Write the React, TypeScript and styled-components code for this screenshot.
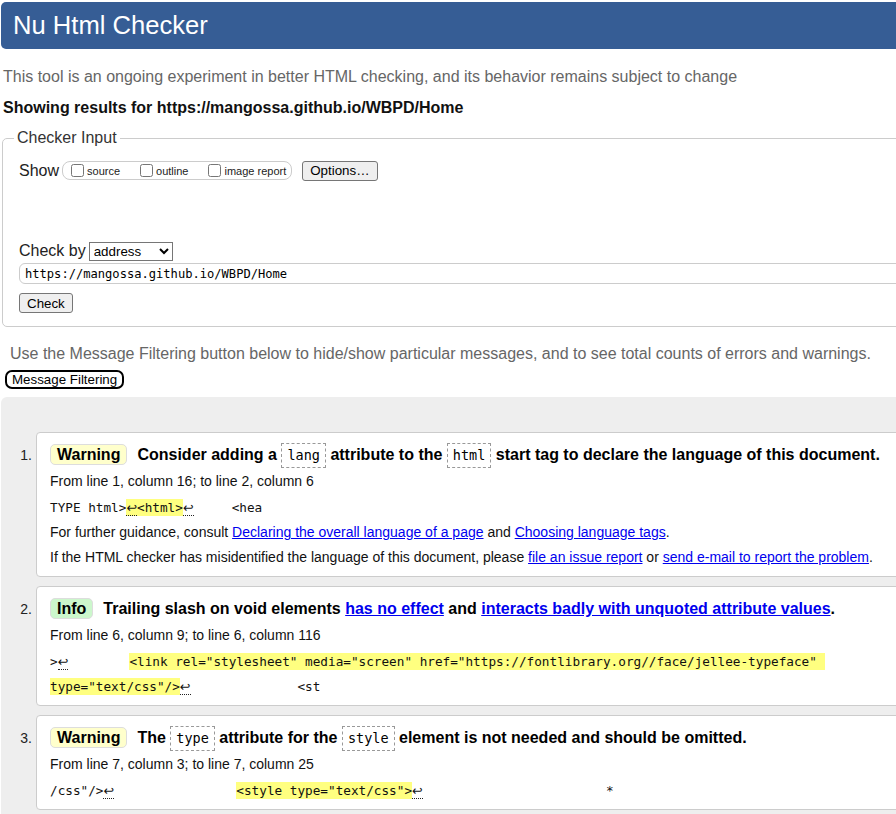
import React from "react";
import styled, { createGlobalStyle } from "styled-components";

const GlobalStyle = createGlobalStyle`
  body {
    margin: 0;
    background: #fff;
    color: #000;
    font-family: "Liberation Sans", Arial, sans-serif;
    font-size: 16px;
    overflow: hidden;
  }
`;

type BadgeKind = "warning" | "info";

interface Message {
  kind: BadgeKind;
  title: React.ReactNode;
  location: string;
  extract: React.ReactNode;
  notes?: React.ReactNode[];
}

const Page = styled.div`
  width: 940px;
  padding: 2px 0 0 1px;
`;

const Header = styled.h1`
  margin: 0;
  height: 47px;
  padding-left: 12px;
  background: #365d95;
  color: #fff;
  font-size: 25.6px;
  font-weight: normal;
  line-height: 47px;
  border-radius: 5px 0 0 5px;
`;

const Intro = styled.p`
  margin: 19px 0 0 2px;
  color: #666;
  line-height: 18px;
`;

const ResultsFor = styled.p`
  margin: 13px 0 0 2px;
  font-weight: bold;
  line-height: 18px;
  color: #111;
`;

const InputFieldset = styled.fieldset`
  margin: 12px 0 0 1px;
  padding: 0 0 13px 16px;
  border: 1px solid #ccc;
  border-radius: 5px;
  min-width: 0;
`;

const Legend = styled.legend`
  margin-left: -5px;
  padding: 0 3px;
  line-height: 18px;
  color: #333;
`;

const Row = styled.div<{ $top: number; $height: number }>`
  display: flex;
  align-items: center;
  margin-top: ${(p) => p.$top}px;
  height: ${(p) => p.$height}px;
`;

const FieldLabel = styled.span`
  font-size: 16px;
  line-height: 18px;
  color: #222;
  margin-right: 3px;
`;

const OptionGroup = styled.span`
  display: inline-flex;
  align-items: center;
  height: 17px;
  padding: 0 5px 0 4px;
  border: 1px solid #ccc;
  border-radius: 8px;
`;

const OptionItem = styled.label<{ $last?: boolean }>`
  display: inline-flex;
  align-items: center;
  font-size: 11px;
  color: #222;
  margin-right: ${(p) => (p.$last ? 0 : 16)}px;
`;

const Checkbox = styled.input`
  width: 13px;
  height: 13px;
  margin: 0 3px 0 4px;
`;

const PlainButton = styled.button<{ $gap?: number }>`
  height: 20px;
  margin-left: ${(p) => p.$gap ?? 0}px;
  padding: 0 7px;
  font-family: "Liberation Sans", Arial, sans-serif;
  font-size: 13.33px;
  color: #000;
  background: #efefef;
  border: 1px solid #767676;
  border-radius: 3px;
`;

const AddressSelect = styled.select`
  width: 84px;
  height: 19px;
  font-family: "Liberation Sans", Arial, sans-serif;
  font-size: 13.33px;
  color: #000;
  background: #fff;
  border: 1px solid #767676;
  border-radius: 0;
`;

const AddressInput = styled.input`
  display: block;
  box-sizing: border-box;
  width: 100%;
  height: 21px;
  margin-top: 3px;
  padding: 0 5px;
  font-family: "DejaVu Sans Mono", monospace;
  font-size: 12.1px;
  color: #000;
  border: 1px solid #ccc;
  border-radius: 6px;
`;

const CheckRow = styled.div`
  margin-top: 9px;
  height: 20px;
`;

const Hint = styled.p`
  margin: 18px 0 0 9px;
  color: #666;
  line-height: 18px;
`;

const FilterButton = styled.button`
  display: block;
  margin: 7px 0 0 4px;
  height: 19px;
  padding: 0 5px;
  font-family: "Liberation Sans", Arial, sans-serif;
  font-size: 13.33px;
  line-height: 15px;
  color: #000;
  background: #fff;
  border: 2px solid #000;
  border-radius: 7px;
`;

const MessageArea = styled.div`
  margin-top: 8px;
  padding-top: 35px;
  background: #eee;
  border-radius: 6px 0 0 0;
  min-height: 400px;
`;

const MessageList = styled.ol`
  display: flex;
  flex-direction: column;
  gap: 9px;
  margin: 0;
  padding: 0;
  list-style: none;
`;

const MessageItem = styled.li`
  display: flex;
  align-items: flex-start;
`;

const Num = styled.span`
  flex: 0 0 35px;
  box-sizing: border-box;
  padding: 10px 4px 0 0;
  text-align: right;
  font-size: 14px;
  line-height: 26px;
  color: #222;
`;

const Card = styled.div`
  flex: 1;
  padding: 9px 12px 6px 13px;
  background: #fff;
  border: 1px solid #ccc;
  border-radius: 4px;
`;

const Title = styled.div`
  font-size: 16px;
  font-weight: bold;
  line-height: 26px;
  color: #000;
  white-space: nowrap;
`;

const Badge = styled.span<{ $kind: BadgeKind }>`
  display: inline-block;
  margin-right: 10px;
  padding: 0 6px;
  line-height: 19px;
  background: ${(p) => (p.$kind === "warning" ? "#ffffcc" : "#ccf7cc")};
  border: 1px solid #ddd;
  border-radius: 5px;
`;

const CodeBox = styled.code`
  display: inline-block;
  padding: 0 5px;
  font-family: "DejaVu Sans Mono", monospace;
  font-size: 13.5px;
  font-weight: normal;
  line-height: 23px;
  border: 1px dashed #999;
`;

const Link = styled.a`
  color: #00e;
  text-decoration: underline;
`;

const Location = styled.div`
  margin-top: 1px;
  font-size: 14px;
  line-height: 25px;
  color: #111;
`;

const Extract = styled.div`
  margin-top: 1px;
  font-family: "DejaVu Sans Mono", monospace;
  font-size: 12.7px;
  line-height: 25px;
  white-space: pre;
  color: #111;
`;

const Mark = styled.span`
  background: #ffff80;
  padding: 1px 0;
`;

const Return = styled.span`
  font-family: "DejaVu Sans", sans-serif;
  border-bottom: 1px dotted #222;
`;

const Note = styled.div`
  font-size: 14px;
  line-height: 25px;
  color: #111;
`;

const Ret: React.FC = () => <Return>↩</Return>;

const buildMessages = (): Message[] => [
  {
    kind: "warning",
    title: (
      <>
        Consider adding a <CodeBox>lang</CodeBox> attribute to the{" "}
        <CodeBox>html</CodeBox> start tag to declare the language of this
        document.
      </>
    ),
    location: "From line 1, column 16; to line 2, column 6",
    extract: (
      <>
        {"TYPE html>"}
        <Mark>
          <Ret />
          {"<html>"}
        </Mark>
        <Ret />
        {"     <hea"}
      </>
    ),
    notes: [
      <>
        For further guidance, consult{" "}
        <Link href="#">Declaring the overall language of a page</Link> and{" "}
        <Link href="#">Choosing language tags</Link>.
      </>,
      <>
        If the HTML checker has misidentified the language of this document,
        please <Link href="#">file an issue report</Link> or{" "}
        <Link href="#">send e-mail to report the problem</Link>.
      </>,
    ],
  },
  {
    kind: "info",
    title: (
      <>
        Trailing slash on void elements <Link href="#">has no effect</Link> and{" "}
        <Link href="#">interacts badly with unquoted attribute values</Link>.
      </>
    ),
    location: "From line 6, column 9; to line 6, column 116",
    extract: (
      <>
        {">"}
        <Ret />
        {"        "}
        <Mark>
          {
            '<link rel="stylesheet" media="screen" href="https://fontlibrary.org//face/jellee-typeface" \ntype="text/css"/>'
          }
        </Mark>
        <Ret />
        {"              <st"}
      </>
    ),
  },
  {
    kind: "warning",
    title: (
      <>
        The <CodeBox>type</CodeBox> attribute for the <CodeBox>style</CodeBox>{" "}
        element is not needed and should be omitted.
      </>
    ),
    location: "From line 7, column 3; to line 7, column 25",
    extract: (
      <>
        {'/css"/>'}
        <Ret />
        {"                "}
        <Mark>{'<style type="text/css">'}</Mark>
        <Ret />
        {"                        *"}
      </>
    ),
  },
];

export default function App() {
  const messages = buildMessages();

  return (
    <Page>
      <GlobalStyle />
      <Header>Nu Html Checker</Header>
      <Intro>
        This tool is an ongoing experiment in better HTML checking, and its
        behavior remains subject to change
      </Intro>
      <ResultsFor>Showing results for https://mangossa.github.io/WBPD/Home</ResultsFor>

      <InputFieldset>
        <Legend>Checker Input</Legend>
        <Row $top={13} $height={21}>
          <FieldLabel>Show</FieldLabel>
          <OptionGroup>
            <OptionItem>
              <Checkbox type="checkbox" />
              source
            </OptionItem>
            <OptionItem>
              <Checkbox type="checkbox" />
              outline
            </OptionItem>
            <OptionItem $last>
              <Checkbox type="checkbox" />
              image report
            </OptionItem>
          </OptionGroup>
          <PlainButton type="button" $gap={10}>
            Options…
          </PlainButton>
        </Row>

        <Row $top={61} $height={18}>
          <FieldLabel>Check by</FieldLabel>
          <AddressSelect defaultValue="address">
            <option value="address">address</option>
            <option value="upload">file upload</option>
            <option value="text">text input</option>
          </AddressSelect>
        </Row>
        <AddressInput
          type="text"
          defaultValue="https://mangossa.github.io/WBPD/Home"
        />
        <CheckRow>
          <PlainButton type="button">Check</PlainButton>
        </CheckRow>
      </InputFieldset>

      <Hint>
        Use the Message Filtering button below to hide/show particular
        messages, and to see total counts of errors and warnings.
      </Hint>
      <FilterButton type="button">Message Filtering</FilterButton>

      <MessageArea>
        <MessageList>
          {messages.map((msg, i) => (
            <MessageItem key={i}>
              <Num>{i + 1}.</Num>
              <Card>
                <Title>
                  <Badge $kind={msg.kind}>
                    {msg.kind === "warning" ? "Warning" : "Info"}
                  </Badge>
                  {msg.title}
                </Title>
                <Location>{msg.location}</Location>
                <Extract>{msg.extract}</Extract>
                {msg.notes?.map((note, j) => (
                  <Note key={j}>{note}</Note>
                ))}
              </Card>
            </MessageItem>
          ))}
        </MessageList>
      </MessageArea>
    </Page>
  );
}
